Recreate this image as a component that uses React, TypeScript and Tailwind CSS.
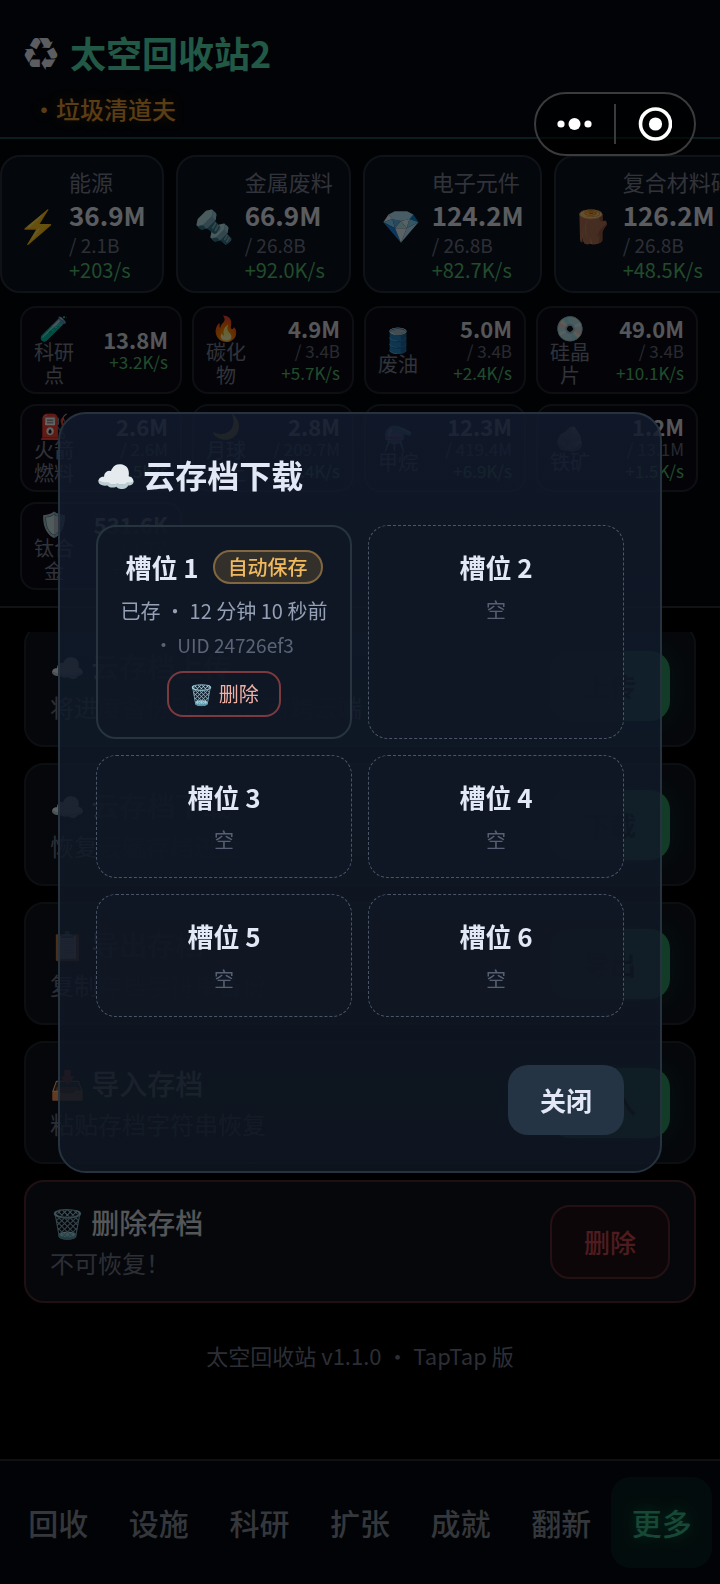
import type { ReactNode } from "react";

const primary = [
  { icon: "⚡", name: "能源", value: "36.9M", cap: "/ 2.1B", rate: "+203/s" },
  { icon: "🔩", name: "金属废料", value: "66.9M", cap: "/ 26.8B", rate: "+92.0K/s" },
  { icon: "💎", name: "电子元件", value: "124.2M", cap: "/ 26.8B", rate: "+82.7K/s" },
  { icon: "🪵", name: "复合材料碎片", value: "126.2M", cap: "/ 26.8B", rate: "+48.5K/s" },
];

const secondary = [
  { icon: "🧪", name: "科研点", value: "13.8M", cap: "", rate: "+3.2K/s" },
  { icon: "🔥", name: "碳化物", value: "4.9M", cap: "/ 3.4B", rate: "+5.7K/s" },
  { icon: "🛢️", name: "废油", value: "5.0M", cap: "/ 3.4B", rate: "+2.4K/s" },
  { icon: "💿", name: "硅晶片", value: "49.0M", cap: "/ 3.4B", rate: "+10.1K/s" },
  { icon: "⛽", name: "火箭燃料", value: "2.6M", cap: "/ 2.6M", rate: "+1.5K/s" },
  { icon: "🌙", name: "月球尘土", value: "2.8M", cap: "/ 209.7M", rate: "+3.4K/s" },
  { icon: "⚗️", name: "甲烷", value: "12.3M", cap: "/ 419.4M", rate: "+6.9K/s" },
  { icon: "🪨", name: "铁矿", value: "1.2M", cap: "/ 13.1M", rate: "+1.5K/s" },
  { icon: "🛡️", name: "钛合金", value: "531.6K", cap: "/ 3.3M", rate: "+10.0/s" },
];

const actions = [
  { icon: "☁️", title: "云存档上传", desc: "将进度备份到云端，可跨云端", label: "上传" },
  { icon: "☁️", title: "云存档下载", desc: "恢复云端存档进度", label: "下载" },
  { icon: "📋", title: "导出存档", desc: "复制存档字符串备份", label: "导出" },
  { icon: "📥", title: "导入存档", desc: "粘贴存档字符串恢复", label: "导入" },
  { icon: "🗑️", title: "删除存档", desc: "不可恢复！", label: "删除", danger: true },
];

const tabs = ["回收", "设施", "科研", "扩张", "成就", "翻新", "更多"];

function Header() {
  return (
    <header className="h-[139px] shrink-0 border-b-2 border-[#1d4a4e] bg-[#05080f] px-6 pt-[29px]">
      <h1 className="flex items-center gap-3 text-[36px] font-bold leading-[46px] text-[#55dcae]">
        <span className="text-[34px] text-[#e5e9f0]">♻</span>
        太空回收站2
      </h1>
      <p className="ml-2 mt-[18px] text-2xl font-medium leading-8 text-[#e09a35] [text-shadow:0_0_12px_#f59e0b40]">
        ・垃圾清道夫
      </p>
    </header>
  );
}

function Resources() {
  return (
    <section className="shrink-0 overflow-hidden border-b-2 border-[#2a2e38] bg-[#04060c] py-4">
      <div className="flex gap-3">
        {primary.map((r) => (
          <div
            key={r.name}
            className="flex shrink-0 items-center gap-[11px] rounded-[20px] border-2 border-[#262d38] bg-[#0c121e] px-4 py-2"
          >
            <span className="w-10 text-[32px] leading-none">{r.icon}</span>
            <div className="whitespace-nowrap">
              <div className="text-[22px] leading-8 text-[#7a7f91]">{r.name}</div>
              <div className="text-[26px] font-bold leading-9 text-[#e2e6ee]">{r.value}</div>
              <div className="text-[19px] leading-6 text-[#6f7486]">{r.cap}</div>
              <div className="text-xl leading-[26px] text-[#54bd6e]">{r.rate}</div>
            </div>
          </div>
        ))}
      </div>
      <div className="mt-[13px] grid grid-cols-4 gap-2.5 pl-5 pr-[22px]">
        {secondary.map((r) => (
          <div
            key={r.name}
            className="flex h-[88px] items-center justify-between rounded-2xl border-2 border-[#22262f] bg-[#0a0c16] px-3"
          >
            <div className="w-10 text-center">
              <div className="text-2xl leading-[26px]">{r.icon}</div>
              <div className="text-xl leading-[23px] text-[#7a7f91]">{r.name}</div>
            </div>
            <div className="whitespace-nowrap text-right">
              <div className="text-[22px] font-bold leading-6 text-[#d2d6dd]">{r.value}</div>
              <div className="text-[17px] leading-[22px] text-[#646979]">{r.cap}</div>
              <div className="text-[17px] leading-[22px] text-[#54bd6e]">{r.rate}</div>
            </div>
          </div>
        ))}
      </div>
    </section>
  );
}

function ActionList() {
  return (
    <main className="mt-6 min-h-0 flex-1 overflow-hidden px-6">
      <div className="-mt-2 flex flex-col gap-4">
        {actions.map((a) => (
          <div
            key={a.title}
            className={`flex h-[123px] items-center justify-between rounded-[20px] border-2 bg-[#0f131c] px-6 ${
              a.danger ? "border-[#50282f]" : "border-[#1e262d]"
            }`}
          >
            <div className="pt-[3px]">
              <div className="text-[28px] font-medium leading-10 text-[#d2d6dd]">
                {a.icon} {a.title}
              </div>
              <div className="text-2xl leading-[42px] text-[#6f7486]">{a.desc}</div>
            </div>
            {a.danger ? (
              <button className="rounded-[20px] border-2 border-[#5c2a30] bg-[#210f17] px-8 py-4 text-[26px] font-medium leading-[38px] text-[#c4474f]">
                {a.label}
              </button>
            ) : (
              <button className="rounded-[20px] bg-[#2f9665] px-[34px] py-4 text-[26px] font-bold leading-[38px] text-[#06130d] shadow-[0_0_28px_#10b98130]">
                {a.label}
              </button>
            )}
          </div>
        ))}
      </div>
      <p className="mt-[34px] text-center text-[22px] leading-9 text-[#6f7486]">太空回收站 v1.1.0 ・ TapTap 版</p>
    </main>
  );
}

function TabBar() {
  return (
    <nav className="flex shrink-0 border-t-2 border-[#242a32] bg-[#05080f] px-2 py-4">
      {tabs.map((t) => (
        <a
          key={t}
          href="#"
          className={`flex-1 rounded-[20px] py-6 text-center text-[30px] font-medium leading-[43px] ${
            t === "更多" ? "bg-[#07201e] text-[#3bb184] [text-shadow:0_0_14px_#10b98180]" : "text-[#838995]"
          }`}
        >
          {t}
        </a>
      ))}
    </nav>
  );
}

function Slot({ n, badge, children }: { n: number; badge?: string; children: ReactNode }) {
  return (
    <div
      className={`rounded-[20px] text-center ${
        badge
          ? "border-2 border-[#26343f] bg-[#101825]/85 px-3 pb-[18px] pt-5"
          : "border border-dashed border-[#4a5668] bg-[#111825]/85 px-3 pb-[18px] pt-[21px]"
      }`}
    >
      <div className="flex items-center justify-center gap-3.5">
        <h3 className="text-[26px] font-bold leading-10 text-[#e2e8f5]">槽位 {n}</h3>
        {badge && (
          <span className="rounded-full border-2 border-[#80673f] bg-[#33302c] px-[13px] text-xl font-medium leading-[30px] text-[#f0b95c]">
            {badge}
          </span>
        )}
      </div>
      {children}
    </div>
  );
}

function SlotDialog() {
  return (
    <div className="fixed inset-0 flex items-center justify-center bg-black/60 px-[58px]">
      <div
        role="dialog"
        aria-label="云存档下载"
        className="w-full rounded-[28px] border-2 border-[#26333f] bg-linear-to-b from-[#121c2e]/85 to-[#101723]/85 px-9 py-9"
      >
        <h2 className="text-[32px] font-bold leading-[48px] text-[#e2e8f5]">☁️ 云存档下载</h2>
        <div className="mt-[27px] grid grid-cols-2 gap-4">
          <Slot n={1} badge="自动保存">
            <p className="mt-[5px] text-xl leading-[38px] text-[#94a0b5]">已存 ・ 12 分钟 10 秒前</p>
            <p className="text-[19px] leading-[30px] text-[#5a6477]">・ UID 24726ef3</p>
            <button className="mb-0.5 mt-[11px] rounded-2xl border-2 border-[#7c3a3f] px-5 text-xl leading-[42px] text-[#f0b0a5]">
              🗑️ 删除
            </button>
          </Slot>
          {[2, 3, 4, 5, 6].map((n) => (
            <Slot key={n} n={n}>
              <p className="mt-1 text-xl leading-[38px] text-[#566072]">空</p>
            </Slot>
          ))}
        </div>
        <div className="mt-12 flex justify-end">
          <button className="rounded-[20px] bg-[#253444] px-8 py-4 text-[26px] font-bold leading-[38px] text-[#e2e8f5]">
            关闭
          </button>
        </div>
      </div>
    </div>
  );
}

function Capsule() {
  return (
    <div className="fixed right-6 top-[92px] flex h-16 w-[162px] items-center rounded-full border-2 border-[#3b3b3d] bg-black/60">
      <button aria-label="菜单" className="flex flex-1 justify-center">
        <svg width="36" height="14" viewBox="0 0 36 14" fill="#fff">
          <circle cx="4" cy="7" r="3.6" />
          <circle cx="17.5" cy="7" r="6" />
          <circle cx="31" cy="7" r="3.6" />
        </svg>
      </button>
      <span className="h-10 w-[2px] bg-[#3b3b3d]" />
      <button aria-label="关闭小程序" className="flex flex-1 justify-center">
        <svg width="34" height="34" viewBox="0 0 34 34" fill="none">
          <circle cx="17.5" cy="17" r="15" stroke="#fff" strokeWidth="3.6" />
          <circle cx="17.5" cy="17" r="6.6" fill="#fff" />
        </svg>
      </button>
    </div>
  );
}

export default function App() {
  return (
    <div className="flex h-screen flex-col bg-black font-['Noto_Sans_CJK_SC',sans-serif]">
      <Header />
      <Resources />
      <ActionList />
      <TabBar />
      <SlotDialog />
      <Capsule />
    </div>
  );
}
